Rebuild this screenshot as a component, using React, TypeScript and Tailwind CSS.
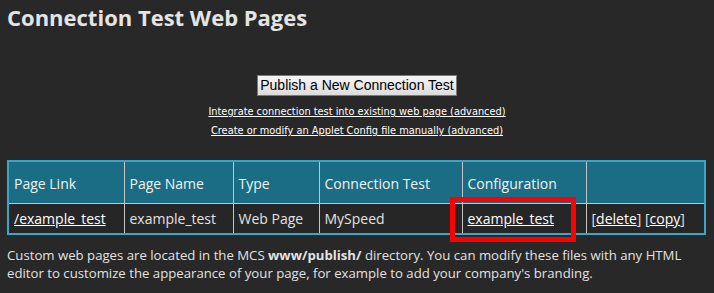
import React from "react";

function App() {
	const cols = [
		{ label: "Page Link", w: "w-[116px]" },
		{ label: "Page Name", w: "w-[109px]" },
		{ label: "Type", w: "w-[86px]" },
		{ label: "Connection Test", w: "w-[143px]" },
		{ label: "Configuration", w: "w-[124px]" },
		{ label: "", w: "" },
	];

	return (
		<div className="min-h-screen w-[714px] bg-[#282828] px-[7px] pt-[2px] text-[#e2e2e2] font-['Open_Sans',_'Noto_Sans',_sans-serif]">
			<h1 className="text-[22px] font-bold leading-[30px] text-[#e4e4e4]">
				Connection Test Web Pages
			</h1>

			<div className="mt-[43px] flex flex-col items-center">
				<button className="h-[21px] w-[200px] border border-[#7a7a7a] bg-gradient-to-b from-[#f6f6f6] to-[#dcdcdc] font-['Liberation_Sans',_sans-serif] text-[14px] leading-[19px] text-black">
					Publish a New Connection Test
				</button>
				{/* advanced links */}
				<a
					href="#"
					className="mt-[9px] font-['DejaVu_Sans',_sans-serif] text-[9.8px] leading-[14px] text-white underline"
				>
					Integrate connection test into existing web page (advanced)
				</a>
				<a
					href="#"
					className="mt-[5px] font-['DejaVu_Sans',_sans-serif] text-[9.8px] leading-[14px] text-white underline"
				>
					Create or modify an Applet Config file manually (advanced)
				</a>
			</div>

			<div className="relative mt-[22px]">
				<table className="w-[699px] table-fixed border-collapse border-2 border-[#3aa6c7] text-[14px]">
					<thead>
						<tr className="h-[42px] bg-[#1a6d84]">
							{cols.map((c, i) => (
								<th
									key={i}
									className={`${c.w} border border-[#c4c4c4] px-[5px] pt-[2px] text-left font-normal text-[#f2f2f2]`}
								>
									{c.label}
								</th>
							))}
						</tr>
					</thead>
					<tbody>
						<tr className="h-[31px] bg-[#262626]">
							<td className="border border-[#c4c4c4] px-[5px]">
								<a href="#" className="text-white underline">
									/example_test
								</a>
							</td>
							<td className="border border-[#c4c4c4] px-[5px]">example_test</td>
							<td className="border border-[#c4c4c4] px-[5px]">Web Page</td>
							<td className="border border-[#c4c4c4] px-[5px]">MySpeed</td>
							<td className="border border-[#c4c4c4] px-[5px]">
								<a href="#" className="text-white underline">
									example_test
								</a>
							</td>
							<td className="border border-[#c4c4c4] px-[5px]">
								[<a href="#" className="text-white underline">delete</a>] [
								<a href="#" className="text-white underline">copy</a>]
							</td>
						</tr>
					</tbody>
				</table>
				{/* red highlight box */}
				<div className="pointer-events-none absolute left-[443px] top-[37px] h-[45px] w-[126px] border-[5px] border-[#ff0000]" />
			</div>

			<p className="mt-[11px] text-[13.2px] leading-[18px] text-[#e2e2e2]">
				Custom web pages are located in the MCS <b>www/publish/</b> directory. You can modify
				these files with any HTML editor to customize the appearance of your page, for example
				to add your company's branding.
			</p>
		</div>
	);
}

export default App;
